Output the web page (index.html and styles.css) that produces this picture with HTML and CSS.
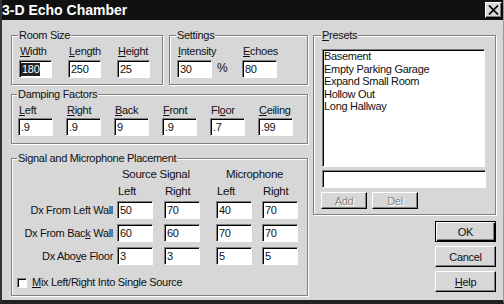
FILE: index.html
```html
<!doctype html>
<html>
  <head>
    <meta charset="utf-8">
    <title>3-D Echo Chamber</title>
    <link rel="stylesheet" href="styles.css">
  </head>
  <body>
    <div class="window">
      <div class="titlebar">
        <span class="title">3-D Echo Chamber</span>
        <button class="close" aria-label="Close">
          <svg width="11" height="10" viewBox="0 0 11 10"><path d="M1 0.5L10 9.5M10 0.5L1 9.5" stroke="#000" stroke-width="1.7"/></svg>
        </button>
      </div>
      <div class="content">
        <div class="left">
          <div class="top-row">
            <fieldset class="group room">
              <legend>Room Size</legend>
              <div class="room-fields">
                <div class="field">
                  <label><u>W</u>idth</label>
                  <div class="edit"><span class="sel">180</span></div>
                </div>
                <div class="field">
                  <label for="length"><u>L</u>ength</label>
                  <input id="length" class="edit" value="250">
                </div>
                <div class="field">
                  <label for="height"><u>H</u>eight</label>
                  <input id="height" class="edit" value="25">
                </div>
              </div>
            </fieldset>
            <fieldset class="group settings">
              <legend>Settings</legend>
              <div class="settings-fields">
                <div class="field">
                  <label for="intensity"><u>I</u>ntensity</label>
                  <input id="intensity" class="edit wide" value="30">
                </div>
                <span class="unit">%</span>
                <div class="field">
                  <label for="echoes"><u>E</u>choes</label>
                  <input id="echoes" class="edit wide" value="80">
                </div>
              </div>
            </fieldset>
          </div>

          <fieldset class="group damping">
            <legend>Damping Factors</legend>
            <div class="damping-fields">
              <div class="field"><label for="d-left"><u>L</u>eft</label><input id="d-left" class="edit wide" value=".9"></div>
              <div class="field"><label for="d-right"><u>R</u>ight</label><input id="d-right" class="edit wide" value=".9"></div>
              <div class="field"><label for="d-back"><u>B</u>ack</label><input id="d-back" class="edit wide" value="9"></div>
              <div class="field"><label for="d-front"><u>F</u>ront</label><input id="d-front" class="edit wide" value=".9"></div>
              <div class="field"><label for="d-floor">Fl<u>o</u>or</label><input id="d-floor" class="edit wide" value=".7"></div>
              <div class="field"><label for="d-ceiling"><u>C</u>eiling</label><input id="d-ceiling" class="edit wide" value=".99"></div>
            </div>
          </fieldset>

          <fieldset class="group placement">
            <legend>Signal and Microphone Placement</legend>
            <div class="placement-grid">
              <span></span>
              <span class="head source">Source Signal</span>
              <span class="head mic">Microphone</span>

              <span></span>
              <span class="sub">Left</span>
              <span class="sub">Right</span>
              <span class="sub">Left</span>
              <span class="sub">Right</span>

              <span class="row-label">Dx From Left Wall</span>
              <input class="edit cell" value="50">
              <input class="edit cell" value="70">
              <input class="edit cell" value="40">
              <input class="edit cell" value="70">

              <span class="row-label">Dx From Bac<u>k</u> Wall</span>
              <input class="edit cell" value="60">
              <input class="edit cell" value="60">
              <input class="edit cell" value="70">
              <input class="edit cell" value="70">

              <span class="row-label">Dx Abo<u>v</u>e Floor</span>
              <input class="edit cell" value="3">
              <input class="edit cell" value="3">
              <input class="edit cell" value="5">
              <input class="edit cell" value="5">
            </div>
            <label class="check"><input type="checkbox"><span><u>M</u>ix Left/Right Into Single Source</span></label>
          </fieldset>
        </div>

        <div class="right">
          <fieldset class="group presets">
            <legend><u>P</u>resets</legend>
            <ul class="listbox">
              <li>Basement</li>
              <li>Empty Parking Garage</li>
              <li>Expand Small Room</li>
              <li>Hollow Out</li>
              <li>Long Hallway</li>
            </ul>
            <input class="edit preset-name" value="">
            <div class="preset-buttons">
              <button class="btn small" disabled>Add</button>
              <button class="btn small" disabled>Del</button>
            </div>
          </fieldset>
          <div class="actions">
            <button class="btn default">OK</button>
            <button class="btn">Cancel</button>
            <button class="btn"><u>H</u>elp</button>
          </div>
        </div>
      </div>
    </div>
  </body>
</html>
```

FILE: styles.css
```css
* {
  box-sizing: border-box;
}
body {
  margin: 0;
  font-family: "Liberation Sans", Arial, sans-serif;
  font-size: 11px;
  letter-spacing: -0.3px;
  color: #111;
  background: #d7d7d7;
}
u {
  text-decoration-thickness: 1px;
  text-underline-offset: 1px;
}
.window {
  width: 504px;
  height: 304px;
  background: #d7d7d7;
  border-left: 2px solid #333;
  border-right: 1px solid #999;
  border-bottom: 4px solid #222;
}
.titlebar {
  height: 20px;
  background: #111;
  color: #fff;
  display: flex;
  align-items: center;
  justify-content: space-between;
  padding: 0 1px 0 0;
}
.title {
  font-size: 14px;
  font-weight: bold;
  letter-spacing: 0;
  line-height: 20px;
}
.close {
  width: 17px;
  height: 16px;
  padding: 0;
  display: flex;
  align-items: center;
  justify-content: center;
  background: #d7d7d7;
  border: 1px solid;
  border-color: #fff #000 #000 #fff;
  box-shadow: inset -1px -1px 0 #808080;
}

.content {
  display: flex;
  gap: 5px;
  padding: 9px 0 0 9px;
}
.left {
  width: 297px;
  display: flex;
  flex-direction: column;
}
.top-row {
  display: flex;
  gap: 6px;
}

/* etched group boxes */
.group {
  margin: 0;
  padding: 4px 0 0 7px;
  min-width: 0;
  border: 1px solid #808080;
  box-shadow: inset 1px 1px 0 #fff, 1px 1px 0 #fff;
}
.group legend {
  padding: 0 1px;
  margin-left: -1px;
  line-height: 12px;
  background: #d7d7d7;
}
.field {
  display: flex;
  flex-direction: column;
  align-items: flex-start;
}
.field label {
  line-height: 13px;
  padding-left: 1px;
  margin-bottom: 2px;
}

/* sunken edit fields */
.edit {
  width: 33px;
  height: 18px;
  margin: 0;
  padding: 0 0 0 2px;
  background: #fff;
  border: 1px solid;
  border-color: #808080 #fff #fff #808080;
  box-shadow: inset 1px 1px 0 #000;
  font: inherit;
  letter-spacing: inherit;
  color: #111;
  outline: none;
  display: flex;
  align-items: center;
}
.edit.wide {
  width: 35px;
}
.sel {
  background: #222;
  color: #fff;
  line-height: 13px;
  padding: 0 1px;
  margin-left: -1px;
}

.room {
  width: 152px;
  height: 56px;
}
.room-fields {
  display: grid;
  grid-template-columns: 49px 49px 49px;
}
.settings {
  flex: 1;
  height: 56px;
}
.settings-fields {
  display: grid;
  grid-template-columns: 35px 30px 35px;
  align-items: end;
}
.unit {
  padding: 0 0 3px 5px;
  font-size: 12px;
}

.damping {
  margin-top: 3px;
  height: 56px;
  padding-left: 6px;
}
.damping-fields {
  display: grid;
  grid-template-columns: repeat(6, 48px);
}
.damping .field label {
  margin-bottom: 1px;
}

.placement {
  margin-top: 8px;
  height: 144px;
  padding: 4px 0 0 0;
}
.placement legend {
  margin-left: 5px;
}
.placement-grid {
  display: grid;
  grid-template-columns: 105px 47px 52px 46px 36px;
  grid-auto-rows: auto;
  row-gap: 5px;
}
.head {
  line-height: 13px;
  font-size: 11.5px;
}
.source {
  grid-column: 2 / 4;
  padding-left: 5px;
}
.mic {
  grid-column: 4 / 6;
  padding-left: 10px;
}
.sub {
  line-height: 13px;
  padding-left: 1px;
  margin: -1px 0 -2px;
  font-size: 11.5px;
}
.row-label {
  text-align: right;
  padding-right: 4px;
  align-self: center;
}
.cell {
  width: 36px;
}
.check {
  display: flex;
  align-items: center;
  gap: 5px;
  margin: 11px 0 0 5px;
  line-height: 13px;
}
.check input {
  appearance: none;
  width: 10px;
  height: 10px;
  margin: 0;
  background: #fff;
  border: 1px solid;
  border-color: #808080 #fff #fff #808080;
  box-shadow: inset 1px 1px 0 #000;
}

.right {
  width: 183px;
  display: flex;
  flex-direction: column;
}
.presets {
  height: 186px;
  padding: 8px 10px 0 8px;
}
.listbox {
  list-style: none;
  margin: 0;
  padding: 0 0 0 1px;
  height: 118px;
  background: #fff;
  border: 1px solid;
  border-color: #808080 #fff #fff #808080;
  box-shadow: inset 1px 1px 0 #000;
  line-height: 12.5px;
}
.preset-name {
  width: 164px;
  margin-top: 3px;
}
.preset-buttons {
  display: flex;
  gap: 5px;
  margin-top: 4px;
  margin-left: -1px;
}

/* raised buttons */
.btn {
  width: 61px;
  height: 21px;
  padding: 0;
  background: #d7d7d7;
  border: 1px solid;
  border-color: #fff #000 #000 #fff;
  box-shadow: inset -1px -1px 0 #808080;
  font: inherit;
  letter-spacing: inherit;
  color: #111;
}
.btn.small {
  width: 46px;
  height: 17px;
}
.btn:disabled {
  color: #888;
  text-shadow: 1px 1px 0 #fff;
}
.btn.default {
  border-color: #000;
  box-shadow: inset 1px 1px 0 #fff, inset -1px -1px 0 #000, inset -2px -2px 0 #808080;
}
.actions {
  display: flex;
  flex-direction: column;
  align-items: flex-end;
  gap: 4px;
  margin-top: 6px;
}
```
